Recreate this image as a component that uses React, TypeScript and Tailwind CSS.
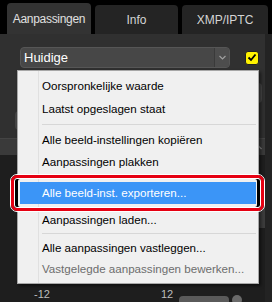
import React from 'react';

const font = "font-['Liberation_Sans',Arial,sans-serif]";

function Item({
  label,
  h,
  active,
  disabled,
}: {
  label: string;
  h: string;
  active?: boolean;
  disabled?: boolean;
}) {
  return (
    <div
      className={`relative flex items-center ${h} ${active ? 'bg-[#3b95f7] text-white' : disabled ? 'text-[#6d6d6d]' : 'text-black'}`}
    >
      <span className="pl-[22px] text-[11.6px] leading-none whitespace-nowrap">{label}</span>
    </div>
  );
}

function Sep({ h }: { h: string }) {
  return (
    <div className={`flex items-center ${h}`}>
      <div className="ml-[22px] h-[2px] flex-1 border-t border-[#d7d7d7] border-b-white" />
    </div>
  );
}

export default function App() {
  return (
    <div className={`relative h-[302px] w-[272px] overflow-hidden bg-black ${font}`}>
      {/* tabs */}
      <div className="flex h-[34px] items-end gap-[4px] pl-[7px]">
        <div className="flex h-[31px] w-[84px] items-center justify-center rounded-t-[4px] bg-[#333333] text-[12px] tracking-[-0.3px] text-[#e0e0e0]">
          Aanpassingen
        </div>
        <div className="flex h-[29px] w-[83px] items-center justify-center rounded-t-[4px] bg-[#242424] text-[12px] text-[#d4d4d4]">
          Info
        </div>
        <div className="flex h-[29px] w-[86px] items-center justify-center rounded-t-[4px] bg-[#242424] text-[12px] text-[#d4d4d4]">
          XMP/IPTC
        </div>
      </div>

      {/* panel */}
      <div className="flex h-[268px]">
        <div className="flex w-[265px] flex-col bg-[#303030]">
          <div className="flex items-center pl-[20px] pt-[13px]">
            <div className="flex h-[21px] w-[210px] items-center rounded-[4px] border border-[#565656] bg-[#474747]">
              <span className="flex-1 pl-[3px] text-[13px] text-white">Huidige</span>
              <div className="flex h-full w-[15px] items-center justify-center rounded-r-[4px] border-l border-[#3a3a3a] bg-[#4d4d4d]">
                <svg width="7" height="5" viewBox="0 0 7 5">
                  <path d="M0.5 1 L3.5 4 L6.5 1" fill="none" stroke="#a0a0a0" strokeWidth="1.2" />
                </svg>
              </div>
            </div>
            <div className="ml-[15px] flex h-[14px] w-[14px] items-center justify-center rounded-[3px] border border-[#222] bg-[#fff200]">
              <svg width="10" height="9" viewBox="0 0 10 9">
                <path d="M1.5 4.5 L4 7 L8.5 1.5" fill="none" stroke="#000" strokeWidth="1.8" />
              </svg>
            </div>
          </div>
          <div className="mt-[15px] flex h-[20px] justify-end pr-[3px]">
            <div className="w-[100px] rounded-[4px] bg-[#474747]" />
          </div>
          <div className="flex h-[35px] items-center pl-[15px]">
            <div className="h-[19px] w-[60px] rounded-[4px] bg-[#454545]" />
          </div>
          <div className="flex h-[17px] items-center justify-end border-t border-[#444] bg-[#3a3a3a] pr-[3px]">
            <svg width="9" height="6" viewBox="0 0 9 6">
              <path d="M0.5 5 L4.5 1 L8.5 5" fill="none" stroke="#8a8a8a" strokeWidth="1.2" />
            </svg>
          </div>
          <div className="relative flex flex-1 flex-col bg-[#1e1e1e]">
            <div className="mt-[45px] ml-auto h-[28px] w-[12px] bg-[#3c3c3c]" />
            <div className="mt-auto flex h-[16px] items-start text-[11px] text-[#bdbdbd]">
              <span className="ml-[34px] mt-[1px] leading-[14px]">-12</span>
              <span className="ml-[111px] mt-[1px] leading-[14px]">12</span>
              <div className="ml-[6px] mt-[10px] h-[6px] w-[50px] rounded-t-[4px] bg-[#5a5a5a]" />
              <div className="ml-[3px] mt-[9px] h-[10px] w-[10px] rounded-full bg-[#6a6a6a]" />
            </div>
          </div>
        </div>
        <div className="w-[7px] bg-[#232323]" />
      </div>

      {/* context menu */}
      <div className="absolute left-[17px] top-[70px] w-[242px] border border-[#a7a7a7] bg-[#f0f0f0] px-[2px] shadow-[2px_2px_3px_rgba(0,0,0,0.5)]">
        <div className="pointer-events-none absolute bottom-0 left-[20px] top-0 w-[2px] border-l border-[#e0e0e0] border-r-white" />
        <div className="relative pt-[3px] pb-[4px]">
          <Item label="Oorspronkelijke waarde" h="h-[23px]" />
          <Item label="Laatst opgeslagen staat" h="h-[23px]" />
          <Sep h="h-[9px]" />
          <Item label="Alle beeld-instellingen kopiëren" h="h-[22px]" />
          <Item label="Aanpassingen plakken" h="h-[21px]" />
          <Sep h="h-[10px]" />
          <Item label="Alle beeld-inst. exporteren..." h="h-[22px]" active />
          <div className="h-[5px]" />
          <Item label="Aanpassingen laden..." h="h-[22px]" />
          <Sep h="h-[6px]" />
          <Item label="Alle aanpassingen vastleggen..." h="h-[22px]" />
          <Item label="Vastgelegde aanpassingen bewerken..." h="h-[20px]" disabled />
        </div>
      </div>

      {/* callout */}
      <div className="absolute left-[10px] top-[174px] h-[38px] w-[255px] rounded-[7px] border border-white">
        <div className="h-full w-full rounded-[6px] border-[3px] border-[#e60012]">
          <div className="h-full w-full rounded-[3px] border border-white shadow-[inset_3px_0_0_#000,inset_-3px_0_0_#000]" />
        </div>
      </div>
    </div>
  );
}
